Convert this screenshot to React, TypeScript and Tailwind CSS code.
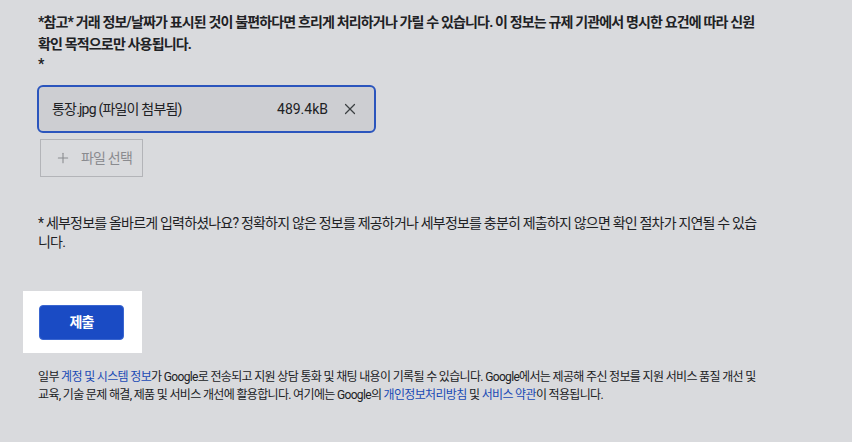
import React from 'react';
import { X, Plus } from 'lucide-react';

const FONT = { fontFamily: 'Roboto, "Noto Sans CJK KR", sans-serif' };

const App: React.FC = () => {
  return (
    <div className="min-h-screen w-full bg-[#d9dadd] text-[#202124] tracking-[-0.05em]" style={FONT}>
      <div className="pl-[38px] pt-[11px] w-[764px]">
        {/* 안내 문구 */}
        <p className="text-[14px] font-bold leading-[22px] break-all tracking-[-0.06em]">
          *참고* 거래 정보/날짜가 표시된 것이 불편하다면 흐리게 처리하거나 가릴 수 있습니다. 이 정보는 규제 기관에서 명시한 요건에 따라 신원 확인 목적으로만 사용됩니다.
        </p>
        <p className="text-[14px] font-bold leading-[18px]">*</p>

        {/* 첨부 파일 */}
        <div className="mt-[12px] -ml-[1px] w-[339px] h-[48px] flex items-center pl-[13px] pr-[15px] rounded-[6px] border-2 border-[#2b55bd] bg-[#cdced2]">
          <span className="text-[14px] text-[#202124]">통장.jpg (파일이 첨부됨)</span>
          <span className="ml-auto text-[14px] text-[#202124] tracking-normal">489.4kB</span>
          <X size={18} strokeWidth={1.6} className="ml-[13px] text-[#3c4043]" />
        </div>

        <button className="mt-[6px] ml-[2px] w-[103px] h-[38px] flex items-center gap-[10px] pl-[14px] border border-[#b3b4b8] text-[14px] text-[#8a8b8f]">
          <Plus size={16} strokeWidth={1.6} />
          <span>파일 선택</span>
        </button>

        <p className="mt-[37px] text-[14px] leading-[19px] text-[#202124] break-all">
          * 세부정보를 올바르게 입력하셨나요? 정확하지 않은 정보를 제공하거나 세부정보를 충분히 제출하지 않으면 확인 절차가 지연될 수 있습니다.
        </p>

        {/* 제출 */}
        <div className="mt-[39px] -ml-[15px] w-[119px] h-[62px] bg-white flex items-center pl-[16px]">
          <button className="w-[85px] h-[35px] rounded-[4px] bg-[#1a4bc4] border border-[#3a66d0] text-white text-[14px] font-bold">
            제출
          </button>
        </div>

        <p className="mt-[15px] text-[12px] leading-[18px] text-[#202124] tracking-[-0.055em] break-keep">
          일부 <a className="text-[#1a4ab5]">계정 및 시스템 정보</a>가 Google로 전송되고 지원 상담 통화 및 채팅 내용이 기록될 수 있습니다. Google에서는 제공해 주신 정보를 지원 서비스 품질 개선 및 교육, 기술 문제 해결, 제품 및 서비스 개선에 활용합니다. 여기에는 Google의{' '}
          <a className="text-[#1a4ab5]">개인정보처리방침</a> 및 <a className="text-[#1a4ab5]">서비스 약관</a>이 적용됩니다.
        </p>
      </div>
    </div>
  );
};

export default App;
